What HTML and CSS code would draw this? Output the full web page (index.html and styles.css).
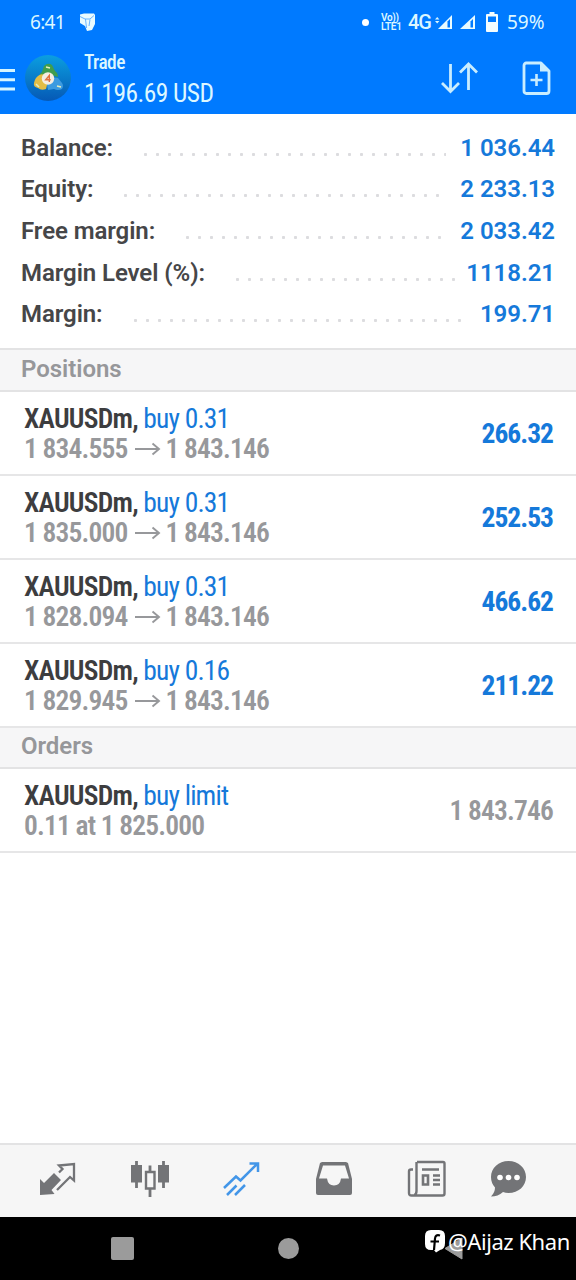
FILE: index.html
```html
<!DOCTYPE html>
<html lang="en">
<head>
<meta charset="utf-8">
<title>Trade</title>
<link rel="stylesheet" href="styles.css">
</head>
<body>
<div class="app">
  <header class="top">
    <div class="status">
      <span class="clock">6:41</span>
      <svg class="cube" width="17" height="19" viewBox="0 0 17 19"><path d="M1 1.500 5 .5h10l1 1.500v9l-3 6-5 1-2-5-5-3z" fill="#e9fbff"/><path d="M1 3.500l5 2.500h5l4-3.500M6.500 6l1 9M11 6.500 10 13" fill="none" stroke="#5aaaff" stroke-width=".9"/></svg>
      <span class="spacer"></span>
      <i class="bullet"></i>
      <span class="volte"><b>Vo))</b><b>LTE1</b></span>
      <span class="net">4G</span>
      <svg class="sig1" width="17" height="15" viewBox="0 0 17 15"><path d="M0 4.500 2.200 2l2.200 2.500zM0 6l2.200 2.500L4.400 6z" fill="#d9f6ff"/><path d="M17 0v14H3z" fill="#e9fbff"/><path d="M12.500 6.500 15 4v8.500h-2.500z" fill="#007aff"/></svg>
      <svg class="sig2" width="15" height="15" viewBox="0 0 15 15"><path d="M15 0v14H0z" fill="#e9fbff"/><path d="M10.500 6.500 13 4v8.500h-2.500z" fill="#007aff"/></svg>
      <svg class="batt" width="12" height="20" viewBox="0 0 12 20"><path d="M3.500 0h5v2H11q1 0 1 1v16q0 1-1 1H1q-1 0-1-1V3q0-1 1-1h2.500z" fill="#f4fdff"/><path d="M2 4.500h8V10H2z" fill="#007aff"/></svg>
      <span class="pct">59%</span>
    </div>
    <div class="bar">
      <svg class="menu" width="15" height="24" viewBox="0 0 15 24"><path d="M0 2.500h15M0 11.700h15M0 21h15" stroke="#d5f5ff" stroke-width="3"/></svg>
      <svg class="logo" width="48" height="50" viewBox="0 0 48 50">
        <defs><linearGradient id="disc" x1="0" y1="0" x2="0" y2="1"><stop offset="0" stop-color="#0b9fe0"/><stop offset="1" stop-color="#0659b5"/></linearGradient></defs>
        <circle cx="24" cy="25" r="23" fill="url(#disc)"/>
        <path d="M20 13q4-4 8-1l3 6q3 2 3 6l-10-3-8 4q-2-3 2-6z" fill="#3f9d4e"/>
        <path d="M14 23q3-3 7-1l3 6-2 8q-5 2-8-1-5-1-4-5 1-5 4-7z" fill="#e3bd45"/>
        <path d="M27 24l7 1 4 5q2 3 0 6-4 2-8 0l-6 1-1-5z" fill="#3c9be0"/>
        <path d="M12 31l3 3M33 33l4 1M22 14l4 1" fill="none" stroke="#e6efc0" stroke-width="1.500"/>
        <circle cx="24" cy="25.500" r="6.200" fill="#f4eee2"/>
        <path d="M25.300 29v-6.500l-3.600 4.300h5" fill="none" stroke="#e0713d" stroke-width="1.400"/>
      </svg>
      <div class="title"><span class="cond t1">Trade</span><span class="cond t2">1 196.69 USD</span></div>
      <span class="spacer"></span>
      <svg class="sort" width="38" height="34" viewBox="0 0 38 34"><path d="M10.500 3v27M2 22l8.500 8.500L19 22M28.500 29V3M20 11.500 28.500 3 37 11.500" fill="none" stroke="#c9edff" stroke-width="2.800"/></svg>
      <svg class="add" width="29" height="35" viewBox="0 0 29 35"><path d="M4 2h15l8 8v20q0 2.500-2.500 2.500h-20Q2 32.500 2 30V4.500Q2 2 4.500 2z" fill="none" stroke="#c9edff" stroke-width="2.800" stroke-linejoin="round"/><path d="M18 2v8.500h9z" fill="#c9edff"/><path d="M14.500 13v12M8.500 19h12" stroke="#c9edff" stroke-width="2.600"/></svg>
    </div>
  </header>

  <section class="summary">
    <div class="line"><span>Balance:</span><i class="dots"></i><b>1 036.44</b></div>
    <div class="line"><span>Equity:</span><i class="dots"></i><b>2 233.13</b></div>
    <div class="line"><span>Free margin:</span><i class="dots"></i><b>2 033.42</b></div>
    <div class="line"><span>Margin Level (%):</span><i class="dots close"></i><b>1118.21</b></div>
    <div class="line"><span>Margin:</span><i class="dots"></i><b>199.71</b></div>
  </section>

  <h2 class="head first">Positions</h2>
  <div class="row"><div class="info"><span class="cond sym"><b>XAUUSDm,</b> <em>buy 0.31</em></span><span class="price"><span class="cond">1 834.555</span><svg class="to" width="26" height="14" viewBox="0 0 26 14"><path d="M0 7h24M17.500 1.500 24 7l-6.500 5.500" fill="none" stroke="#97989b" stroke-width="1.900"/></svg><span class="cond">1 843.146</span></span></div><span class="cond profit">266.32</span></div>
  <div class="row"><div class="info"><span class="cond sym"><b>XAUUSDm,</b> <em>buy 0.31</em></span><span class="price"><span class="cond">1 835.000</span><svg class="to" width="26" height="14" viewBox="0 0 26 14"><path d="M0 7h24M17.500 1.500 24 7l-6.500 5.500" fill="none" stroke="#97989b" stroke-width="1.900"/></svg><span class="cond">1 843.146</span></span></div><span class="cond profit">252.53</span></div>
  <div class="row"><div class="info"><span class="cond sym"><b>XAUUSDm,</b> <em>buy 0.31</em></span><span class="price"><span class="cond">1 828.094</span><svg class="to" width="26" height="14" viewBox="0 0 26 14"><path d="M0 7h24M17.500 1.500 24 7l-6.500 5.500" fill="none" stroke="#97989b" stroke-width="1.900"/></svg><span class="cond">1 843.146</span></span></div><span class="cond profit">466.62</span></div>
  <div class="row"><div class="info"><span class="cond sym"><b>XAUUSDm,</b> <em>buy 0.16</em></span><span class="price"><span class="cond">1 829.945</span><svg class="to" width="26" height="14" viewBox="0 0 26 14"><path d="M0 7h24M17.500 1.500 24 7l-6.500 5.500" fill="none" stroke="#97989b" stroke-width="1.900"/></svg><span class="cond">1 843.146</span></span></div><span class="cond profit">211.22</span></div>
  <h2 class="head">Orders</h2>
  <div class="row"><div class="info"><span class="cond sym"><b>XAUUSDm,</b> <em>buy limit</em></span><span class="price"><span class="cond">0.11 at 1 825.000</span></span></div><span class="cond profit pending">1 843.746</span></div>

  <div class="fill"></div>

  <nav class="tabs">
    <svg width="38" height="34" viewBox="0 0 38 34"><path d="M1 17l4 4L15 11l7 7-9.500 10 3 4L1 33z" fill="#737477"/><path d="M18 28 31 15l4 3.500V2L20 3.500l3.500 3.500L20 10.500" fill="none" stroke="#737477" stroke-width="2.300"/></svg>
    <svg width="40" height="38" viewBox="0 0 40 38"><path d="M6.500 1v27M33.500 1v27M20 5.500V12M20 29v8" stroke="#737477" stroke-width="2.800"/><path d="M1 5h11v17.500H1zM28 5h11v17.500H28z" fill="#737477"/><path d="M16 12h8.500v16.500H16z" fill="none" stroke="#737477" stroke-width="2.400"/></svg>
    <svg width="38" height="36" viewBox="0 0 38 36"><path d="M2 27 14 15.500l4.500 4L35 3M27.500 2.500H36V11M5 34l9.500-9.500M13 34l10-10" fill="none" stroke="#4396e8" stroke-width="2.500"/></svg>
    <svg width="38" height="36" viewBox="0 0 38 36"><path d="M7 1h24l2 1 4 16v14q0 2-2 2H3q-2 0-2-2V18L5 2z" fill="#737477"/><path d="M8 4.500h22l4 13h-8q-1 7-7 7t-7-7H4z" fill="#f6f6f6"/></svg>
    <svg width="39" height="38" viewBox="0 0 39 38"><path d="M10 2h26q1.500 0 1.500 1.500v30q0 2-2 2h-31Q2 35.500 2 33V11.500q0-2 2-2h2M9.500 2v29q0 3-2 4" fill="none" stroke="#737477" stroke-width="2.400"/><path d="M15 9.500h17M26 15.500h7M26 20h7M26 24.500h7" stroke="#737477" stroke-width="2.300"/><path d="M16 15.500h5v9h-5z" fill="none" stroke="#737477" stroke-width="2.600"/></svg>
    <svg width="37" height="38" viewBox="0 0 37 38"><path d="M18.500 1C28.500 1 36 8 36 17s-7.500 16-17.500 16q-3 0-5.500-1-5 4.500-12 4.500 4-4 4-9Q1 23 1 17C1 8 8.500 1 18.500 1z" fill="#737477"/><g fill="#fff"><circle cx="10" cy="17.500" r="2.800"/><circle cx="18.500" cy="17.500" r="2.800"/><circle cx="27" cy="17.500" r="2.800"/></g></svg>
  </nav>
  <footer class="sys">
    <i class="recent"></i><i class="home"></i>
    <svg class="back" width="19" height="23" viewBox="0 0 19 23"><path d="M18 1v21L1 11.500z" fill="#9b9b9b" stroke="#9b9b9b" stroke-linejoin="round"/></svg>
    <div class="mark">
      <svg width="20" height="23" viewBox="0 0 20 23"><path d="M6 0h8q6 0 6 6v7q0 6-5 7l-4 2.500L9 20H6q-6 0-6-6V6q0-6 6-6z" fill="#fff"/><path d="M15 5.500q-4.500-1.500-5 3L9 20M5.500 11.500h8.500" fill="none" stroke="#000" stroke-width="2.200"/></svg>
      <span>@Aijaz Khan</span>
    </div>
  </footer>
</div>
</body>
</html>
```
FILE: styles.css
```css
* { box-sizing: border-box; }
body { margin: 0; background: #fff; font-family: Roboto, "Noto Sans", sans-serif; }
.app { width: 576px; height: 1280px; display: flex; flex-direction: column; overflow: hidden; white-space: nowrap; }
.app > * { flex-shrink: 0; }
svg { display: block; flex: none; }
i, em { font-style: normal; }
.spacer, .app > .fill { flex: 1; }
.cond { font-family: "Roboto Condensed", Roboto, sans-serif; font-stretch: 75%; letter-spacing: -.83px; }

.top { height: 114px; background: #007aff; color: #dcf7ff; }
.status { height: 44px; display: flex; align-items: center; padding: 0 30px; font: 400 19px "Noto Sans", sans-serif; }
.clock { width: 35px; letter-spacing: -.7px; }
.cube { margin-left: 14px; }
.bullet { width: 7px; height: 7px; border-radius: 50%; background: #fff; margin-right: 12px; }
.volte { width: 23px; display: flex; flex-direction: column; font: 10px/9px Roboto, sans-serif; letter-spacing: -.3px; }
.volte b { font-weight: 600; }
.net { width: 23px; font: 500 20px Roboto, sans-serif; letter-spacing: -1px; margin-left: 4px; }
.sig1 { margin-left: 4px; }
.sig2 { margin-left: 8px; }
.batt { margin: 0 9px 0 11px; }
.pct { width: 39px; }
.bar { height: 70px; display: flex; align-items: flex-start; padding-right: 25px; }
.menu { margin-top: 24px; }
.logo { margin: 9px 0 0 9px; }
.title { display: flex; flex-direction: column; margin: 7px 0 0 12px; }
.t1 { font-size: 19.5px; line-height: 24px; letter-spacing: -.6px; font-weight: 500; }
.t2 { font-size: 25.5px; line-height: 36px; letter-spacing: -.55px; }
.sort { margin: 17px 44px 0 0; }
.add { margin-top: 17px; }

.summary { height: 234px; padding: 13px 21px 0; font-size: 24px; font-weight: 600; color: #464648; }
.line { height: 41.6px; display: flex; align-items: center; }
.line span { letter-spacing: -.08px; }
.line b { font-weight: 600; color: #1579da; letter-spacing: -.05px; }
.dots { flex: 1; height: 3px; margin: 13px 14px 0 31px; background: radial-gradient(circle at 1.5px 1.5px, #dcdcdf 1.3px, transparent 1.9px) 0 0 / 12px 3px repeat-x; }
.dots.close { margin-right: 8px; }

.head { margin: 0; height: 41px; border-bottom: 2px solid #e3e3e4; background: #f6f6f7; color: #96979a; font-size: 24px; font-weight: 600; line-height: 37px; padding-left: 21px; letter-spacing: -.05px; }
.head.first { height: 44px; border-top: 2px solid #e3e3e4; line-height: 38px; }
.row { height: 84px; border-bottom: 2px solid #e6e6e7; display: flex; justify-content: space-between; align-items: center; padding: 0 23px 0 24px; font-size: 27.5px; }
.info { display: flex; flex-direction: column; padding-top: 2px; }
.info > span { line-height: 30px; }
.sym { color: #1579da; }
.sym b { color: #3d3d3f; font-weight: 600; letter-spacing: -.75px; }
.price { display: flex; align-items: center; color: #97989b; font-weight: 600; }
.to { margin: 0 5px 0 7px; }
.profit { color: #1579da; font-weight: 700; letter-spacing: -1px; }
.pending { color: #97989b; font-weight: 600; letter-spacing: -.83px; }

.tabs { height: 74px; border-top: 2px solid #e3e3e4; background: #f6f6f6; display: grid; grid-template-columns: 91px 92px 93px 92px 83px 37px; align-items: center; padding: 0 0 4px 39px; }
.sys { position: relative; height: 63px; background: #000; }
.sys > * { position: absolute; }
.recent { left: 111px; top: 20px; width: 23px; height: 23px; border-radius: 2px; background: #9b9b9b; }
.home { left: 278px; top: 21px; width: 21px; height: 21px; border-radius: 50%; background: #9b9b9b; }
.back { left: 444px; top: 20px; }
.mark { left: 425px; top: 9px; display: flex; align-items: center; gap: 3px; color: #fff; font: 400 22px/30px "Noto Sans", sans-serif; letter-spacing: -.45px; }
```
